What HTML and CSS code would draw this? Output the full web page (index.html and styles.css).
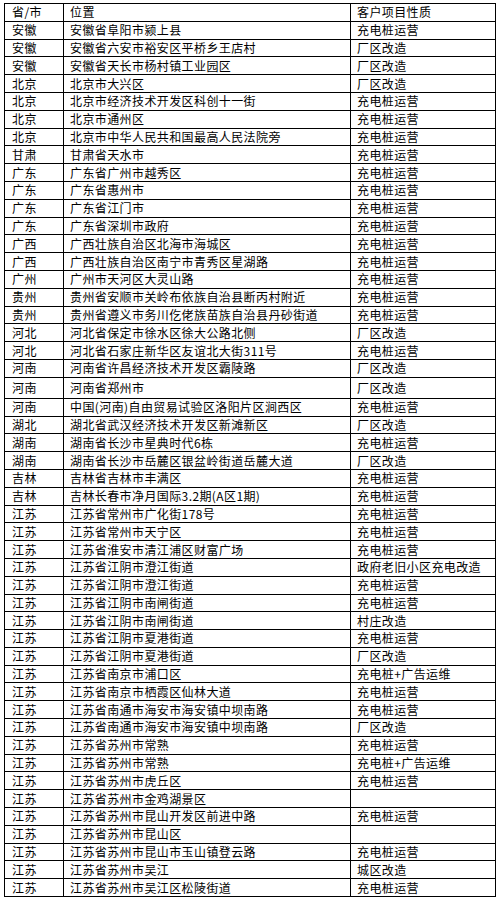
FILE: index.html
```html
<!DOCTYPE html>
<html lang="zh-CN">
<head>
<meta charset="utf-8">
<title>客户项目</title>
<link rel="stylesheet" href="styles.css">
</head>
<body>
<div class="sheet">
  <div class="row"><div class="c1">省/市</div><div class="c2">位置</div><div class="c3">客户项目性质</div></div>
  <div class="row"><div class="c1">安徽</div><div class="c2">安徽省阜阳市颍上县</div><div class="c3">充电桩运营</div></div>
  <div class="row"><div class="c1">安徽</div><div class="c2">安徽省六安市裕安区平桥乡王店村</div><div class="c3">厂区改造</div></div>
  <div class="row"><div class="c1">安徽</div><div class="c2">安徽省天长市杨村镇工业园区</div><div class="c3">厂区改造</div></div>
  <div class="row"><div class="c1">北京</div><div class="c2">北京市大兴区</div><div class="c3">厂区改造</div></div>
  <div class="row"><div class="c1">北京</div><div class="c2">北京市经济技术开发区科创十一街</div><div class="c3">充电桩运营</div></div>
  <div class="row"><div class="c1">北京</div><div class="c2">北京市通州区</div><div class="c3">充电桩运营</div></div>
  <div class="row"><div class="c1">北京</div><div class="c2">北京市中华人民共和国最高人民法院旁</div><div class="c3">充电桩运营</div></div>
  <div class="row"><div class="c1">甘肃</div><div class="c2">甘肃省天水市</div><div class="c3">充电桩运营</div></div>
  <div class="row"><div class="c1">广东</div><div class="c2">广东省广州市越秀区</div><div class="c3">充电桩运营</div></div>
  <div class="row"><div class="c1">广东</div><div class="c2">广东省惠州市</div><div class="c3">充电桩运营</div></div>
  <div class="row"><div class="c1">广东</div><div class="c2">广东省江门市</div><div class="c3">充电桩运营</div></div>
  <div class="row"><div class="c1">广东</div><div class="c2">广东省深圳市政府</div><div class="c3">充电桩运营</div></div>
  <div class="row"><div class="c1">广西</div><div class="c2">广西壮族自治区北海市海城区</div><div class="c3">充电桩运营</div></div>
  <div class="row"><div class="c1">广西</div><div class="c2">广西壮族自治区南宁市青秀区星湖路</div><div class="c3">充电桩运营</div></div>
  <div class="row"><div class="c1">广州</div><div class="c2">广州市天河区大灵山路</div><div class="c3">充电桩运营</div></div>
  <div class="row"><div class="c1">贵州</div><div class="c2">贵州省安顺市关岭布依族自治县断丙村附近</div><div class="c3">充电桩运营</div></div>
  <div class="row"><div class="c1">贵州</div><div class="c2">贵州省遵义市务川仡佬族苗族自治县丹砂街道</div><div class="c3">充电桩运营</div></div>
  <div class="row"><div class="c1">河北</div><div class="c2">河北省保定市徐水区徐大公路北侧</div><div class="c3">厂区改造</div></div>
  <div class="row"><div class="c1">河北</div><div class="c2">河北省石家庄新华区友谊北大街311号</div><div class="c3">充电桩运营</div></div>
  <div class="row"><div class="c1">河南</div><div class="c2">河南省许昌经济技术开发区霸陵路</div><div class="c3">厂区改造</div></div>
  <div class="row tall"><div class="c1">河南</div><div class="c2">河南省郑州市</div><div class="c3">厂区改造</div></div>
  <div class="row"><div class="c1">河南</div><div class="c2">中国(河南)自由贸易试验区洛阳片区涧西区</div><div class="c3">充电桩运营</div></div>
  <div class="row"><div class="c1">湖北</div><div class="c2">湖北省武汉经济技术开发区新滩新区</div><div class="c3">厂区改造</div></div>
  <div class="row"><div class="c1">湖南</div><div class="c2">湖南省长沙市星典时代6栋</div><div class="c3">充电桩运营</div></div>
  <div class="row"><div class="c1">湖南</div><div class="c2">湖南省长沙市岳麓区银盆岭街道岳麓大道</div><div class="c3">厂区改造</div></div>
  <div class="row"><div class="c1">吉林</div><div class="c2">吉林省吉林市丰满区</div><div class="c3">充电桩运营</div></div>
  <div class="row"><div class="c1">吉林</div><div class="c2">吉林长春市净月国际3.2期(A区1期)</div><div class="c3">充电桩运营</div></div>
  <div class="row"><div class="c1">江苏</div><div class="c2">江苏省常州市广化街178号</div><div class="c3">充电桩运营</div></div>
  <div class="row"><div class="c1">江苏</div><div class="c2">江苏省常州市天宁区</div><div class="c3">充电桩运营</div></div>
  <div class="row"><div class="c1">江苏</div><div class="c2">江苏省淮安市清江浦区财富广场</div><div class="c3">充电桩运营</div></div>
  <div class="row"><div class="c1">江苏</div><div class="c2">江苏省江阴市澄江街道</div><div class="c3">政府老旧小区充电改造</div></div>
  <div class="row"><div class="c1">江苏</div><div class="c2">江苏省江阴市澄江街道</div><div class="c3">充电桩运营</div></div>
  <div class="row"><div class="c1">江苏</div><div class="c2">江苏省江阴市南闸街道</div><div class="c3">充电桩运营</div></div>
  <div class="row"><div class="c1">江苏</div><div class="c2">江苏省江阴市南闸街道</div><div class="c3">村庄改造</div></div>
  <div class="row"><div class="c1">江苏</div><div class="c2">江苏省江阴市夏港街道</div><div class="c3">充电桩运营</div></div>
  <div class="row"><div class="c1">江苏</div><div class="c2">江苏省江阴市夏港街道</div><div class="c3">厂区改造</div></div>
  <div class="row"><div class="c1">江苏</div><div class="c2">江苏省南京市浦口区</div><div class="c3">充电桩+广告运维</div></div>
  <div class="row"><div class="c1">江苏</div><div class="c2">江苏省南京市栖霞区仙林大道</div><div class="c3">充电桩运营</div></div>
  <div class="row"><div class="c1">江苏</div><div class="c2">江苏省南通市海安市海安镇中坝南路</div><div class="c3">充电桩运营</div></div>
  <div class="row"><div class="c1">江苏</div><div class="c2">江苏省南通市海安市海安镇中坝南路</div><div class="c3">厂区改造</div></div>
  <div class="row"><div class="c1">江苏</div><div class="c2">江苏省苏州市常熟</div><div class="c3">充电桩运营</div></div>
  <div class="row"><div class="c1">江苏</div><div class="c2">江苏省苏州市常熟</div><div class="c3">充电桩+广告运维</div></div>
  <div class="row"><div class="c1">江苏</div><div class="c2">江苏省苏州市虎丘区</div><div class="c3">充电桩运营</div></div>
  <div class="row"><div class="c1">江苏</div><div class="c2">江苏省苏州市金鸡湖景区</div><div class="c3"></div></div>
  <div class="row"><div class="c1">江苏</div><div class="c2">江苏省苏州市昆山开发区前进中路</div><div class="c3">充电桩运营</div></div>
  <div class="row"><div class="c1">江苏</div><div class="c2">江苏省苏州市昆山区</div><div class="c3"></div></div>
  <div class="row"><div class="c1">江苏</div><div class="c2">江苏省苏州市昆山市玉山镇登云路</div><div class="c3">充电桩运营</div></div>
  <div class="row"><div class="c1">江苏</div><div class="c2">江苏省苏州市吴江</div><div class="c3">城区改造</div></div>
  <div class="row"><div class="c1">江苏</div><div class="c2">江苏省苏州市吴江区松陵街道</div><div class="c3">充电桩运营</div></div>
</div>
</body>
</html>
```
FILE: styles.css
```css
html, body {
  margin: 0;
  padding: 0;
  background: #ffffff;
}
body {
  padding: 3px 0 0 4px;
  font-family: "Noto Sans CJK SC", "Noto Sans", sans-serif;
  font-size: 12px;
  letter-spacing: 0.4px;
  color: #000;
}
.sheet {
  display: flex;
  flex-direction: column;
  width: 492px;
  border-top: 1px solid #000;
  border-left: 1px solid #000;
  box-sizing: border-box;
}
.row {
  display: grid;
  grid-template-columns: 59px 287px 145px;
  height: 17.8px;
  flex: none;
}
.row.tall {
  height: 21px;
}
.row > div {
  box-sizing: border-box;
  border-right: 1px solid #000;
  border-bottom: 1px solid #000;
  display: flex;
  align-items: center;
  white-space: nowrap;
  overflow: hidden;
  line-height: 1;
}
.c1 { padding-left: 7px; }
.c2 { padding-left: 6px; }
.c3 { padding-left: 6px; }
```
